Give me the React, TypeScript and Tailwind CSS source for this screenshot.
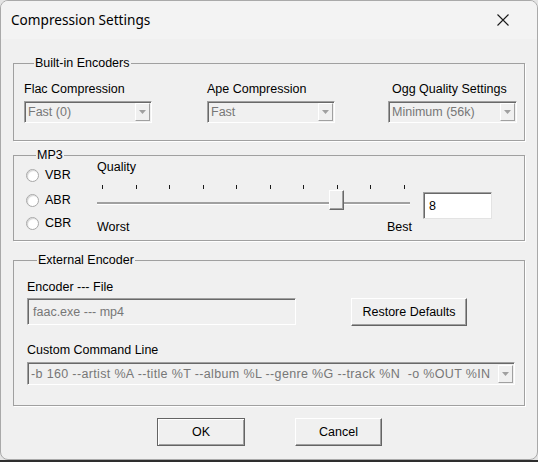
import React from 'react';

const ui = "font-['Liberation_Sans',Arial,sans-serif] text-[12.5px] leading-[14px]";

function Group({ title, className, children }: { title: string; className?: string; children: React.ReactNode }) {
  return (
    <fieldset className={`border border-[#a0a0a0] shadow-[1px_1px_0_#fff] ${className ?? ''}`}>
      <legend className="ml-[10px] px-[1px] leading-[14px] text-black">{title}</legend>
      {children}
    </fieldset>
  );
}

function DropArrow() {
  return (
    <div className="w-[15px] h-[18px] mr-[1px] flex items-center justify-center border border-t-white border-l-white border-r-[#a0a0a0] border-b-[#a0a0a0] bg-[#f0f0f0]">
      <svg width="7" height="4" viewBox="0 0 7 4">
        <path d="M0 0h7L3.5 4z" fill="#a0a0a0" />
      </svg>
    </div>
  );
}

function Combo({ text, className, textClass }: { text: string; className?: string; textClass?: string }) {
  return (
    <div
      className={`flex items-center border border-t-[#a0a0a0] border-l-[#a0a0a0] border-r-white border-b-white shadow-[inset_1px_1px_0_#696969] bg-[#f0f0f0] ${className ?? ''}`}
    >
      <span className={`flex-1 pl-[3px] text-[#777] whitespace-pre overflow-hidden ${textClass ?? ''}`}>{text}</span>
      <DropArrow />
    </div>
  );
}

function Radio({ label, className }: { label: string; className?: string }) {
  return (
    <div className={`flex items-center ${className ?? ''}`}>
      <div className="w-[13px] h-[13px] rounded-full border border-[#a8a8a8] bg-white shadow-[inset_1px_1px_1px_#d4d4d4]" />
      <span className="ml-[6px]">{label}</span>
    </div>
  );
}

function Button({ label, isDefault, className }: { label: string; isDefault?: boolean; className?: string }) {
  const frame = isDefault
    ? 'border border-[#646464] shadow-[inset_1px_1px_0_#fff,inset_-1px_-1px_0_#a0a0a0]'
    : 'border border-t-white border-l-white border-r-[#646464] border-b-[#646464] shadow-[inset_-1px_-1px_0_#a0a0a0]';
  return (
    <button className={`flex items-center justify-center bg-[#f0f0f0] text-black ${frame} ${className ?? ''}`}>
      {label}
    </button>
  );
}

export default function App() {
  const ticks = Array.from({ length: 10 });

  return (
    <div className={`w-[538px] h-[462px] flex flex-col bg-[#e4e4e4] ${ui}`}>
      <div className="h-[460px] flex flex-col rounded-[8px] border border-[#a9a9a9] overflow-hidden bg-[#f0f0f0]">
        {/* title bar */}
        <div className="h-[38px] shrink-0 flex items-center justify-between pl-[10px] pr-[28px] bg-[#f3f3f3]">
          <span className="font-['Noto_Sans',sans-serif] text-[13.6px] leading-[18px] text-black">Compression Settings</span>
          <svg width="12" height="12" viewBox="0 0 12 12">
            <path d="M0.5 0.5l11 11M11.5 0.5l-11 11" stroke="#1a1a1a" strokeWidth="1.1" />
          </svg>
        </div>

        <div className="flex-1 flex flex-col px-[12px]">
          {/* built-in encoders */}
          <Group title="Built-in Encoders" className="mt-[17px] pl-[10px] pt-[12px] pb-[17px]">
            <div className="flex">
              <div className="w-[128px] flex flex-col">
                <span>Flac Compression</span>
                <Combo text="Fast (0)" className="mt-[5px] h-[22px]" />
              </div>
              <div className="ml-[55px] w-[128px] flex flex-col">
                <span>Ape Compression</span>
                <Combo text="Fast" className="mt-[5px] h-[22px]" />
              </div>
              <div className="ml-[53px] w-[129px] flex flex-col">
                <span className="pl-[4px]">Ogg Quality Settings</span>
                <Combo text="Minimum (56k)" className="mt-[5px] h-[22px]" />
              </div>
            </div>
          </Group>

          {/* mp3 */}
          <Group title="MP3" className="mt-[7px] pl-[12px] pb-[6px]">
            <div className="flex -mt-[2px]">
              <div className="w-[71px] flex flex-col pt-[8px]">
                <Radio label="VBR" />
                <Radio label="ABR" className="mt-[11px]" />
                <Radio label="CBR" className="mt-[9px]" />
              </div>
              <div className="w-[315px] flex flex-col">
                <span>Quality</span>
                <div className="mt-[11px] ml-[5px] w-[303px] h-[4px] flex justify-between">
                  {ticks.map((_, i) => (
                    <div key={i} className="w-[1px] h-[4px] bg-[#1a1a1a]" />
                  ))}
                </div>
                <div className="relative mt-[1px] h-[20px] w-[313px]">
                  <div className="absolute left-0 right-0 top-[12px] h-[2px] bg-[#a0a0a0] shadow-[0_1px_0_#fff]" />
                  <div className="absolute left-[232px] top-0 w-[15px] h-[20px] bg-[#f0f0f0] border border-t-white border-l-white border-r-[#696969] border-b-[#696969] shadow-[inset_-1px_-1px_0_#a0a0a0]" />
                </div>
                <div className="mt-[10px] flex justify-between">
                  <span>Worst</span>
                  <span>Best</span>
                </div>
              </div>
              <div className="ml-[11px] mt-[32px] w-[69px] h-[27px] flex items-center pl-[5px] bg-white border border-t-[#a0a0a0] border-l-[#a0a0a0] border-r-[#e3e3e3] border-b-[#e3e3e3] shadow-[inset_1px_1px_0_#696969]">
                8
              </div>
            </div>
          </Group>

          {/* external encoder */}
          <Group title="External Encoder" className="mt-[12px] pl-[13px] pt-[13px] pb-[20px]">
            <span>Encoder --- File</span>
            <div className="flex items-start mt-[4px]">
              <div className="w-[269px] h-[27px] flex items-center pl-[5px] text-[#777] bg-[#f0f0f0] border border-t-[#a0a0a0] border-l-[#a0a0a0] border-r-white border-b-white shadow-[inset_1px_1px_0_#696969]">
                faac.exe --- mp4
              </div>
              <Button label="Restore Defaults" className="ml-[55px] w-[116px] h-[28px]" />
            </div>
            <div className="mt-[17px]">Custom Command Line</div>
            <Combo
              text="-b 160 --artist %A --title %T --album %L --genre %G --track %N  -o %OUT %IN"
              textClass="tracking-[0.35px]"
              className="mt-[5px] w-[488px] h-[23px]"
            />
          </Group>

          {/* dialog buttons */}
          <div className="flex justify-center gap-[50px] mt-[12px] pl-[1px]">
            <Button label="OK" isDefault className="w-[88px] h-[28px]" />
            <Button label="Cancel" className="w-[87px] h-[28px]" />
          </div>
        </div>
      </div>
      <div className="h-[2px] bg-[#2e2e2e]" />
    </div>
  );
}
